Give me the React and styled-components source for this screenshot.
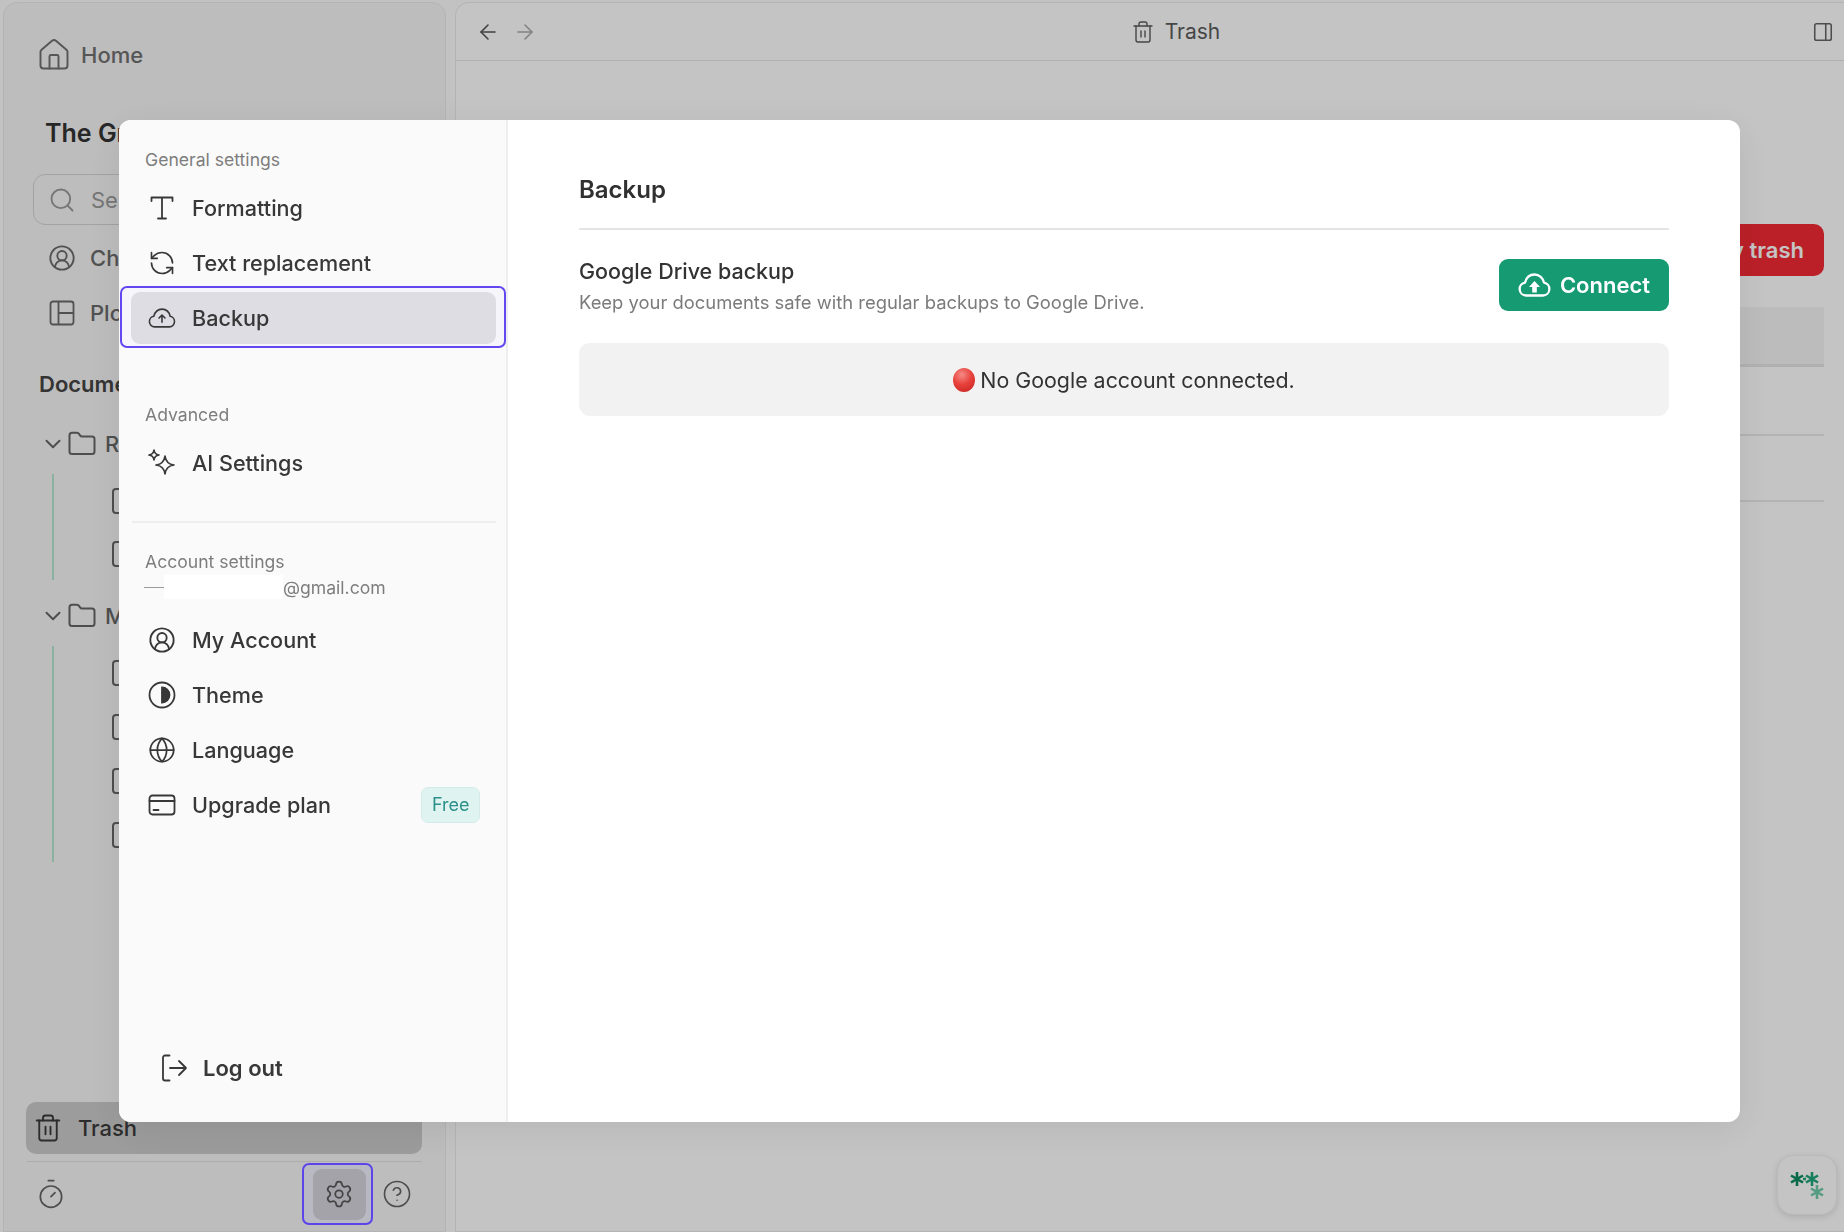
import styled, { createGlobalStyle } from 'styled-components';
import {
  ArrowLeft,
  ArrowRight,
  ChevronDown,
  CircleHelp,
  CircleUserRound,
  Folder,
  Globe,
  Home,
  PanelRight,
  RefreshCcw,
  Search,
  Settings,
  Timer,
  Trash2,
} from 'lucide-react';

const GlobalStyle = createGlobalStyle`
  * { box-sizing: border-box; }
  html, body { margin: 0; padding: 0; height: 100%; overflow: hidden; }
  body {
    background: #fdfdfd;
    font-family: Inter, "Liberation Sans", sans-serif;
    color: #2f2f2f;
  }
`;

const Page = styled.div`
  position: relative;
  display: grid;
  grid-template-columns: 443px 1fr;
  column-gap: 9px;
  width: 1844px;
  height: 1232px;
  padding: 2px 0 0 3px;
  overflow: hidden;
`;

/* app behind the dialog */
const Sidebar = styled.aside`
  display: flex;
  flex-direction: column;
  height: 1230px;
  padding: 26px 23px 0 23px;
  background: #f6f6f6;
  border: 1px solid #ebebeb;
  border-radius: 14px 14px 0 0;
  overflow: hidden;
`;

const HomeRow = styled.div`
  display: flex;
  align-items: center;
  gap: 9px;
  height: 52px;
  padding-left: 9px;
  font-size: 22px;
  font-weight: 500;
  color: #707070;
  white-space: nowrap;
`;

const ProjectTitle = styled.h1`
  margin: 30px 0 0 18px;
  font-size: 25px;
  line-height: 44px;
  font-weight: 600;
  color: #333;
  white-space: nowrap;
`;

const SearchBox = styled.div`
  display: flex;
  align-items: center;
  gap: 15px;
  height: 51px;
  margin: 19px 0 0 6px;
  padding-left: 14px;
  border: 1.5px solid #d4d4d4;
  border-radius: 12px;
  font-size: 22px;
  color: #9a9a9a;
`;

const SideRows = styled.div`
  display: flex;
  flex-direction: column;
  margin-top: 5px;
`;

const SideRow = styled.div`
  display: flex;
  align-items: center;
  gap: 14px;
  height: 55px;
  padding-left: 21px;
  font-size: 22px;
  font-weight: 500;
  color: #6a6a6a;
  white-space: nowrap;
`;

const SectionTitle = styled.h2`
  margin: 28px 0 19px 12px;
  font-size: 22px;
  line-height: 32px;
  font-weight: 600;
  color: #444;
  white-space: nowrap;
`;

const FolderRow = styled.div`
  display: flex;
  align-items: center;
  height: 50px;
  padding-left: 13px;
  font-size: 22px;
  font-weight: 500;
  color: #666;
  white-space: nowrap;
`;

const FolderGlyph = styled(Folder)`
  margin: 0 8px 0 1px;
`;

const FileList = styled.div`
  display: flex;
  flex-direction: column;
  margin: 5px 0 ${(p) => p.$after}px 25px;
  border-left: 2px solid #b5e6d0;
`;

const FileRow = styled.div`
  display: flex;
  align-items: center;
  height: ${(p) => p.$height || 54}px;
  padding-left: 58px;
`;

const FileStub = styled.span`
  display: block;
  width: 24px;
  height: 26px;
  border: 2px solid #666;
  border-radius: 4px;
`;

const TrashRow = styled.div`
  display: flex;
  align-items: center;
  gap: 15px;
  height: 52px;
  margin: auto 0 0 -1px;
  padding-left: 7px;
  background: #cbcbcb;
  border-radius: 10px;
  font-size: 22px;
  font-weight: 500;
  color: #3a3a3a;
`;

const SideFooter = styled.div`
  display: flex;
  align-items: center;
  height: 70px;
  margin-top: 7px;
  padding: 0 10px 5px 8px;
  border-top: 1.5px solid #e2e2e2;
`;

/* sits above the scrim, the keyboard focus ring is not dimmed in the shot */
const GearFocus = styled.button`
  position: relative;
  z-index: 20;
  display: flex;
  align-items: center;
  justify-content: center;
  width: 71px;
  height: 62px;
  margin-left: auto;
  margin-right: 9px;
  padding: 0 0 0 3px;
  background: #b9b9c3;
  border: 2px solid #5b45ea;
  border-radius: 7px;
`;

const GearInner = styled.span`
  display: flex;
  align-items: center;
  justify-content: center;
  width: 53px;
  height: 51px;
  background: #a3a3a9;
  border-radius: 9px;
  color: #444;
`;

const Main = styled.main`
  position: relative;
  height: 1230px;
  background: #fff;
  border: 1px solid #ebebeb;
  border-right: 0;
  border-radius: 14px 0 0 0;
`;

const TopBar = styled.header`
  display: flex;
  align-items: center;
  gap: 13px;
  height: 58px;
  padding: 0 10px 0 20px;
  border-bottom: 1.5px solid #e6e6e6;
`;

const TopTitle = styled.div`
  display: flex;
  align-items: center;
  gap: 10px;
  margin: 0 auto;
  padding-left: 2px;
  font-size: 21px;
  color: #5c5c5c;
`;

const MainBody = styled.div`
  display: flex;
  flex-direction: column;
  align-items: flex-end;
  padding: 163px 20px 0 0;
`;

const EmptyTrash = styled.button`
  width: 260px;
  height: 52px;
  padding: 0 20px 0 0;
  background: #f42a35;
  border: 0;
  border-radius: 10px;
  color: #fff;
  font: 600 22px Inter, sans-serif;
  text-align: right;
`;

const TableHead = styled.div`
  width: 1100px;
  height: 60px;
  margin: 31px 0 3px;
  background: #f5f5f5;
  border-bottom: 3px solid #e6e6e6;
`;

const TableRow = styled.div`
  width: 1100px;
  height: 66px;
  border-bottom: 2px solid #e9e9e9;
`;

const FloatButton = styled.button`
  position: absolute;
  right: 7px;
  bottom: 16px;
  display: flex;
  align-items: center;
  justify-content: center;
  width: 60px;
  height: 60px;
  padding: 0;
  background: #fff;
  border: 1px solid #f2f2f2;
  border-radius: 16px;
  box-shadow: 0 2px 6px rgba(0, 0, 0, 0.12);
`;

/* dialog */
const Scrim = styled.div`
  position: fixed;
  inset: 0;
  z-index: 10;
  display: flex;
  padding: 120px 104px 110px 119px;
  background: rgba(0, 0, 0, 0.23);
`;

const Dialog = styled.div`
  display: grid;
  grid-template-columns: 389px 1fr;
  width: 100%;
  background: #fff;
  border-radius: 12px;
  box-shadow: 0 8px 40px rgba(0, 0, 0, 0.08);
  overflow: hidden;
`;

const Nav = styled.nav`
  display: flex;
  flex-direction: column;
  padding: 25px 0 0 1px;
  background: #fafafa;
  border-right: 2px solid #eeeeee;
`;

const NavLabel = styled.div`
  margin: ${(p) => p.$top || 0}px 0 5px 25px;
  font-size: 17.6px;
  line-height: 30px;
  color: #7d7d7d;
`;

const NavItem = styled.div`
  display: flex;
  align-items: center;
  gap: 16px;
  height: 55px;
  padding-left: 28px;
  font-size: 21.6px;
  font-weight: 500;
  color: #383838;
`;

const IconSlot = styled.span`
  display: flex;
  flex: none;
  align-items: center;
  justify-content: center;
  width: 28px;
`;

const ActiveRing = styled.div`
  height: 62px;
  padding: 4px 8px 2px 9px;
  margin-top: -4px;
  background: #f6f5fc;
  border: 2px solid #6547f2;
  border-radius: 7px;
`;

const ActiveItem = styled(NavItem)`
  height: 52px;
  padding-left: 17px;
  background: #dfdde4;
  border-radius: 9px;
`;

const NavDivider = styled.hr`
  width: 364px;
  margin: 31px 0 24px 12px;
  border: 0;
  border-top: 2px solid #eeeeee;
`;

const EmailLine = styled.div`
  display: flex;
  align-items: center;
  height: 24px;
  margin: -7px 0 13px 24px;
  font-size: 17.6px;
  color: #7d7d7d;
`;

const EmailDash = styled.span`
  width: 20px;
  height: 1px;
  background: #9b9b9b;
`;

const EmailMask = styled.span`
  width: 119px;
  height: 24px;
  background: #fff;
`;

const FreeBadge = styled.span`
  height: 36px;
  margin-left: auto;
  margin-right: 26px;
  padding: 0 9.500px;
  background: #dff3f1;
  border: 1px solid #d3ece9;
  border-radius: 7px;
  font-size: 18px;
  font-weight: 400;
  line-height: 34px;
  color: #2b908a;
`;

const LogOut = styled(NavItem)`
  gap: 15px;
  margin-top: auto;
  margin-bottom: 27px;
  padding-left: 40px;
  font-size: 22px;
  font-weight: 600;
`;

const Content = styled.section`
  display: flex;
  flex-direction: column;
  padding: 0 71px 0 71px;
`;

const ContentTitle = styled.h2`
  height: 110px;
  margin: 0;
  padding-top: 52px;
  font-size: 24px;
  line-height: 36px;
  font-weight: 600;
  color: #303030;
  border-bottom: 2px solid #e4e4e4;
`;

const SettingRow = styled.div`
  display: flex;
  align-items: center;
  justify-content: space-between;
  height: 113px;
`;

const SettingText = styled.div`
  margin-bottom: 2px;
`;

const SettingName = styled.div`
  font-size: 21.500px;
  line-height: 32px;
  font-weight: 500;
  color: #333;
`;

const SettingHint = styled.div`
  font-size: 18.400px;
  line-height: 30px;
  color: #7b7b7b;
`;

const ConnectButton = styled.button`
  display: flex;
  align-items: center;
  gap: 9px;
  height: 52px;
  margin-bottom: 3px;
  padding: 0 19px;
  background: #159a72;
  border: 0;
  border-radius: 9px;
  color: #fff;
  font: 600 22px Inter, sans-serif;
`;

const StatusBox = styled.div`
  display: flex;
  align-items: center;
  justify-content: center;
  gap: 5px;
  height: 73px;
  background: #f2f2f2;
  border-radius: 11px;
  font-size: 21.400px;
  color: #333;
`;

const RedDot = styled.span`
  width: 22px;
  height: 24px;
  border-radius: 50%;
  background: radial-gradient(circle at 40% 28%, #f58a85 0%, #e8413c 45%, #c4211f 100%);
`;

const TypeIcon = () => (
  <svg width="28" height="28" viewBox="0 0 28 28" fill="none" stroke="currentColor" strokeWidth="1.800" strokeLinecap="round" strokeLinejoin="round">
    <path d="M3.500 7V3.500h21V7M14 3.500v21M10 24.500h8" />
  </svg>
);

const CloudIcon = () => (
  <svg width="30" height="22" viewBox="0 0 30 22" fill="none" stroke="currentColor" strokeWidth="1.700" strokeLinecap="round" strokeLinejoin="round">
    <path d="M7 20.500a5.700 5.700 0 0 1-.8-11.300C7.500 4.400 10.800 1.500 15 1.500c4.300 0 7.700 3 8.700 7.700A5.700 5.700 0 0 1 23 20.500z" />
    <path d="M15 15.500V8M11.800 11l3.200-3.200 3.200 3.200" />
  </svg>
);

const SparkleIcon = () => (
  <svg width="28" height="28" viewBox="0 0 28 28" fill="none" stroke="currentColor" strokeWidth="1.700" strokeLinejoin="round">
    <path d="M17 7Q18 15 26 16 18 17 17 25 16 17 8 16 16 15 17 7z" />
    <path d="M6 1Q6.600 5.400 11 6 6.600 6.600 6 11 5.400 6.600 1 6 5.400 5.400 6 1z" />
  </svg>
);

const ThemeIcon = () => (
  <svg width="28" height="28" viewBox="0 0 28 28" fill="none" stroke="currentColor" strokeWidth="1.800">
    <circle cx="14" cy="14" r="12.500" />
    <path d="M14 6.500a7.500 7.500 0 0 1 0 15z" fill="currentColor" />
  </svg>
);

const CardIcon = () => (
  <svg width="28" height="28" viewBox="0 0 28 28" fill="none" stroke="currentColor" strokeWidth="1.800" strokeLinecap="round">
    <rect x="1.500" y="4.500" width="25" height="19" rx="3" />
    <path d="M1.500 10h25M5.500 19h5" />
  </svg>
);

const LogOutIcon = () => (
  <svg width="28" height="28" viewBox="0 0 28 28" fill="none" stroke="currentColor" strokeWidth="1.800" strokeLinecap="round" strokeLinejoin="round">
    <path d="M9.500 1.500H5a2 2 0 0 0-2 2v21a2 2 0 0 0 2 2h4.500" />
    <path d="M10 14h16M19 7l7 7-7 7" />
  </svg>
);

const PlotIcon = () => (
  <svg width="28" height="28" viewBox="0 0 28 28" fill="none" stroke="currentColor" strokeWidth="1.800">
    <rect x="2.500" y="2.500" width="23" height="23" rx="2.500" />
    <path d="M10.500 2.500v23M10.500 14h15" />
  </svg>
);

const CloudFilled = () => (
  <svg width="33" height="24" viewBox="0 0 33 24" fill="none" stroke="#fff" strokeWidth="2.300" strokeLinejoin="round">
    <path d="M8 22.500a6.500 6.500 0 0 1-1-12.900C8.300 4.600 12 1.500 16.500 1.500c4.800 0 8.600 3.400 9.500 8.100a6.500 6.500 0 0 1-1 12.900z" />
    <path d="M16.500 8l5.500 6h-3.200v5.500h-4.600V14H11z" fill="#fff" stroke="none" />
  </svg>
);

const LogoMark = () => (
  <svg width="34" height="34" viewBox="0 0 34 34" fill="none" strokeWidth="2.600">
    <g stroke="#0c8a5f">
      <path d="M7 4v14M1 7.500l12 7M13 7.500l-12 7" />
    </g>
    <g stroke="#1da67a">
      <path d="M22 4v14M16 7.500l12 7M28 7.500l-12 7" />
      <path d="M13 11h3" />
    </g>
    <g stroke="#6fcbaa">
      <path d="M27 17v14M21 20.500l12 7M33 20.500l-12 7" />
    </g>
  </svg>
);

const files = (count, height) =>
  Array.from({ length: count }, (_, i) => (
    <FileRow key={i} $height={height}>
      <FileStub />
    </FileRow>
  ));

const App = () => (
  <Page>
    <GlobalStyle />
    <Sidebar>
      <HomeRow>
        <Home size={36} strokeWidth={1.3} />
        Home
      </HomeRow>
      <ProjectTitle>The Great Novel</ProjectTitle>
      <SearchBox>
        <Search size={28} strokeWidth={1.6} />
        Search
      </SearchBox>
      <SideRows>
        <SideRow>
          <CircleUserRound size={28} strokeWidth={1.6} />
          Characters
        </SideRow>
        <SideRow>
          <PlotIcon />
          Plot
        </SideRow>
      </SideRows>
      <SectionTitle>Documents</SectionTitle>
      <FolderRow>
        <ChevronDown size={26} strokeWidth={1.8} />
        <FolderGlyph size={30} strokeWidth={1.6} />
        Research
      </FolderRow>
      <FileList $after={11}>{files(2, 53)}</FileList>
      <FolderRow>
        <ChevronDown size={26} strokeWidth={1.8} />
        <FolderGlyph size={30} strokeWidth={1.6} />
        Manuscript
      </FolderRow>
      <FileList $after={8}>{files(4, 54)}</FileList>
      <TrashRow>
        <Trash2 size={30} strokeWidth={1.5} />
        Trash
      </TrashRow>
      <SideFooter>
        <Timer size={32} strokeWidth={1.3} color="#666" />
        <GearFocus>
          <GearInner>
            <Settings size={30} strokeWidth={1.4} />
          </GearInner>
        </GearFocus>
        <CircleHelp size={30} strokeWidth={1.3} color="#666" />
      </SideFooter>
    </Sidebar>
    <Main>
      <TopBar>
        <ArrowLeft size={24} strokeWidth={1.6} color="#555" />
        <ArrowRight size={24} strokeWidth={1.6} color="#aaa" />
        <TopTitle>
          <Trash2 size={24} strokeWidth={1.4} />
          Trash
        </TopTitle>
        <PanelRight size={22} strokeWidth={1.7} color="#666" />
      </TopBar>
      <MainBody>
        <EmptyTrash>Empty trash</EmptyTrash>
        <TableHead />
        <TableRow />
        <TableRow />
      </MainBody>
      <FloatButton>
        <LogoMark />
      </FloatButton>
    </Main>
    <Scrim>
      <Dialog>
        <Nav>
          <NavLabel>General settings</NavLabel>
          <NavItem>
            <IconSlot><TypeIcon /></IconSlot>
            Formatting
          </NavItem>
          <NavItem>
            <IconSlot><RefreshCcw size={32} strokeWidth={1.4} /></IconSlot>
            Text replacement
          </NavItem>
          <ActiveRing>
            <ActiveItem>
              <IconSlot><CloudIcon /></IconSlot>
              Backup
            </ActiveItem>
          </ActiveRing>
          <NavLabel $top={52}>Advanced</NavLabel>
          <NavItem>
            <IconSlot><SparkleIcon /></IconSlot>
            AI Settings
          </NavItem>
          <NavDivider />
          <NavLabel>Account settings</NavLabel>
          <EmailLine>
            <EmailDash />
            <EmailMask />
            @gmail.com
          </EmailLine>
          <NavItem>
            <IconSlot><CircleUserRound size={28} strokeWidth={1.6} /></IconSlot>
            My Account
          </NavItem>
          <NavItem>
            <IconSlot><ThemeIcon /></IconSlot>
            Theme
          </NavItem>
          <NavItem>
            <IconSlot><Globe size={30} strokeWidth={1.5} /></IconSlot>
            Language
          </NavItem>
          <NavItem>
            <IconSlot><CardIcon /></IconSlot>
            Upgrade plan
            <FreeBadge>Free</FreeBadge>
          </NavItem>
          <LogOut>
            <LogOutIcon />
            Log out
          </LogOut>
        </Nav>
        <Content>
          <ContentTitle>Backup</ContentTitle>
          <SettingRow>
            <SettingText>
              <SettingName>Google Drive backup</SettingName>
              <SettingHint>Keep your documents safe with regular backups to Google Drive.</SettingHint>
            </SettingText>
            <ConnectButton>
              <CloudFilled />
              Connect
            </ConnectButton>
          </SettingRow>
          <StatusBox>
            <RedDot />
            No Google account connected.
          </StatusBox>
        </Content>
      </Dialog>
    </Scrim>
  </Page>
);

export default App;
